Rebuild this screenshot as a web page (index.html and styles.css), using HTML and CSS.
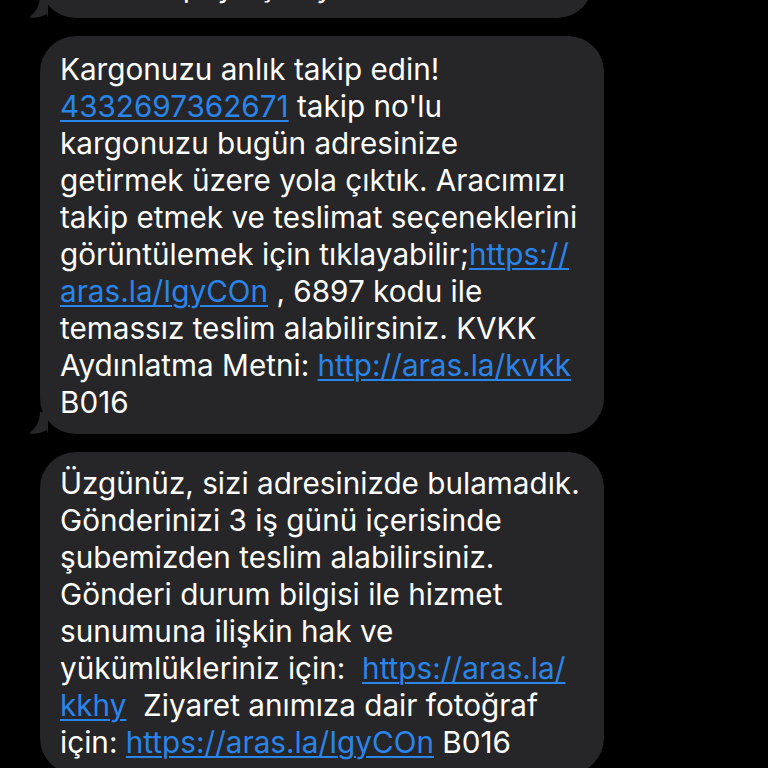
FILE: index.html
```html
<!DOCTYPE html>
<html lang="tr">
<head>
<meta charset="utf-8">
<link rel="stylesheet" href="styles.css">
</head>
<body>
<div class="thread">
  <div class="bubble b1">
    <p class="msg">Bilgilerinizi kimseyle<br>paylaşmayınız, güvende kalın.<br>Bu kodu paylaşmayınız.</p>
    <svg class="tail" viewBox="0 0 20 22" width="20" height="22"><path d="M12 0 C12 9 8 16 1 21.5 C7 22.5 14 21 19 18 L20 22 L20 0 Z" fill="#262628"/></svg>
  </div>
  <div class="bubble b2">
    <p class="msg">Kargonuzu anlık takip edin!<br><a>4332697362671</a> takip no'lu<br>kargonuzu bugün adresinize<br>getirmek üzere yola çıktık. Aracımızı<br>takip etmek ve teslimat seçeneklerini<br>görüntülemek için tıklayabilir;<a>https://<br>aras.la/IgyCOn</a> , 6897 kodu ile<br>temassız teslim alabilirsiniz. KVKK<br>Aydınlatma Metni: <a>http://aras.la/kvkk</a><br>B016</p>
    <svg class="tail" viewBox="0 0 20 22" width="20" height="22"><path d="M12 0 C12 9 8 16 1 21.5 C7 22.5 14 21 19 18 L20 22 L20 0 Z" fill="#262628"/></svg>
  </div>
  <div class="bubble b3">
    <p class="msg">Üzgünüz, sizi adresinizde bulamadık.<br>Gönderinizi 3 iş günü içerisinde<br>şubemizden teslim alabilirsiniz.<br>Gönderi durum bilgisi ile hizmet<br>sunumuna ilişkin hak ve<br>yükümlükleriniz için:&nbsp; <a>https://aras.la/<br>kkhy</a>&nbsp; Ziyaret anımıza dair fotoğraf<br>için: <a>https://aras.la/IgyCOn</a> B016</p>
  </div>
</div>
</body>
</html>
```
FILE: styles.css
```css
html, body {
  margin: 0;
  padding: 0;
  background: #000;
  width: 768px;
  height: 768px;
  overflow: hidden;
}
.thread {
  display: flex;
  flex-direction: column;
  align-items: flex-start;
  gap: 18px;
  padding-left: 40px;
  margin-top: -121px;
}
.bubble {
  position: relative;
  background: #262628;
  border-radius: 36px;
  padding: 15px 20px 13px 20px;
  box-sizing: border-box;
}
.b1 { width: 553px; }
.b2 { width: 564px; }
.b3 { width: 564px; padding-top: 13px; }
.msg {
  margin: 0;
  color: #fff;
  font-family: Inter, "Noto Sans", sans-serif;
  font-size: 29.7px;
  line-height: 37px;
  white-space: nowrap;
  letter-spacing: 0;
}
.msg a {
  color: #2a85ea;
  text-decoration: underline;
  text-decoration-thickness: 2px;
  text-underline-offset: 3px;
}
.tail {
  position: absolute;
  left: -12px;
  bottom: 0;
}
```
